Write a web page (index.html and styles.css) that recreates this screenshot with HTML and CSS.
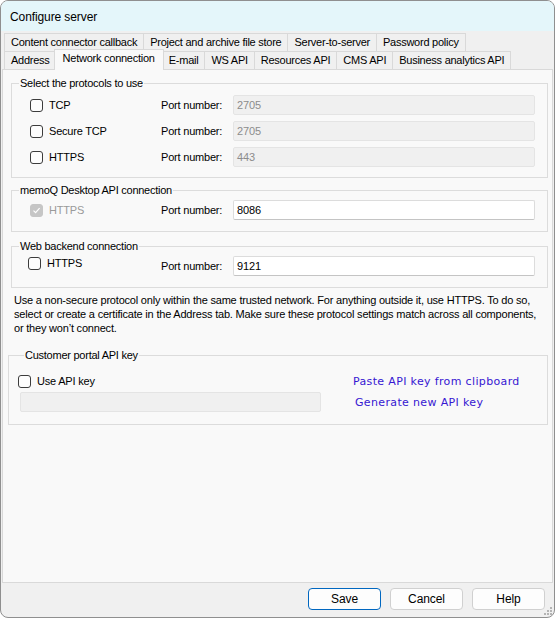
FILE: index.html
```
<!DOCTYPE html>
<html lang="en">
<head>
	<meta charset="UTF-8">
	<title>Configure server</title>
	<link rel="stylesheet" href="styles.css">
</head>
<body>
	<div class="window">
		<div class="titlebar">Configure server</div>

		<div class="tabstrip">
			<div class="tabrow">
				<span class="tab">Content connector callback</span>
				<span class="tab">Project and archive file store</span>
				<span class="tab">Server-to-server</span>
				<span class="tab">Password policy</span>
			</div>
			<div class="tabrow">
				<span class="tab">Address</span>
				<span class="tab active">Network connection</span>
				<span class="tab">E-mail</span>
				<span class="tab">WS API</span>
				<span class="tab">Resources API</span>
				<span class="tab">CMS API</span>
				<span class="tab">Business analytics API</span>
			</div>
		</div>

		<div class="panel">
			<fieldset class="group protocols">
				<legend>Select the protocols to use</legend>
				<div class="row">
					<span class="opt"><span class="check"></span>TCP</span>
					<span class="port-label">Port number:</span>
					<span class="field disabled">2705</span>
				</div>
				<div class="row">
					<span class="opt"><span class="check"></span>Secure TCP</span>
					<span class="port-label">Port number:</span>
					<span class="field disabled">2705</span>
				</div>
				<div class="row">
					<span class="opt"><span class="check"></span>HTTPS</span>
					<span class="port-label">Port number:</span>
					<span class="field disabled">443</span>
				</div>
			</fieldset>

			<fieldset class="group single desktop">
				<legend>memoQ Desktop API connection</legend>
				<div class="row">
					<span class="opt greyed"><span class="check checked-off">
						<svg width="9" height="9" viewBox="0 0 9 9"><path d="M1.5 4.6 L3.6 6.6 L7.6 2.2" fill="none" stroke="#fff" stroke-width="1.2"/></svg>
					</span>HTTPS</span>
					<span class="port-label">Port number:</span>
					<span class="field">8086</span>
				</div>
			</fieldset>

			<fieldset class="group single web">
				<legend>Web backend connection</legend>
				<div class="row">
					<span class="opt raised"><span class="check"></span>HTTPS</span>
					<span class="port-label">Port number:</span>
					<span class="field">9121</span>
				</div>
			</fieldset>

			<p class="note">Use a non-secure protocol only within the same trusted network. For anything outside it, use HTTPS. To do so,<br>select or create a certificate in the Address tab. Make sure these protocol settings match across all components,<br>or they won’t connect.</p>

			<fieldset class="group portal">
				<legend>Customer portal API key</legend>
				<div class="portal-grid">
					<div class="portal-left">
						<span class="opt"><span class="check"></span>Use API key</span>
						<span class="field disabled key"></span>
					</div>
					<div class="portal-links">
						<a class="link">Paste API key from clipboard</a>
						<a class="link second">Generate new API key</a>
					</div>
				</div>
			</fieldset>
		</div>

		<div class="footer">
			<button class="btn default">Save</button>
			<button class="btn">Cancel</button>
			<button class="btn">Help</button>
		</div>

		<svg class="grip" width="10" height="10" viewBox="0 0 10 10">
			<rect x="7" y="1" width="2" height="2" fill="#b4b4b4"/>
			<rect x="4" y="4" width="2" height="2" fill="#b4b4b4"/>
			<rect x="7" y="4" width="2" height="2" fill="#b4b4b4"/>
			<rect x="1" y="7" width="2" height="2" fill="#b4b4b4"/>
			<rect x="4" y="7" width="2" height="2" fill="#b4b4b4"/>
			<rect x="7" y="7" width="2" height="2" fill="#b4b4b4"/>
		</svg>
	</div>
</body>
</html>
```

FILE: styles.css
```
* {
	box-sizing: border-box;
}
html, body {
	margin: 0;
	padding: 0;
	background: #fff;
}
body {
	font-family: "Liberation Sans", Arial, sans-serif;
	font-size: 11px;
	color: #000;
}
.window {
	position: relative;
	width: 555px;
	height: 618px;
	border: 1px solid #8f8f8f;
	border-radius: 8px;
	overflow: hidden;
	background: #f0f0f0;
	display: flex;
	flex-direction: column;
}
.titlebar {
	height: 30px;
	flex: none;
	background: #e4f6fa;
	padding: 9px 0 0 9px;
	font-size: 12px;
	letter-spacing: -0.1px;
}

/* tabs */
.tabstrip {
	flex: none;
	padding: 2px 0 0 3px;
	position: relative;
	z-index: 1;
}
.tabrow {
	display: flex;
	height: 18px;
	align-items: flex-end;
}
.tab {
	height: 18px;
	line-height: 17px;
	padding: 0 6px;
	border: 1px solid #d9d9d9;
	border-bottom: none;
	margin-right: -1px;
	background: #f0f0f0;
	white-space: nowrap;
	letter-spacing: -0.25px;
}
.tab.active {
	height: 21px;
	margin: 0 -2px -1px -2px;
	padding: 0 8px;
	line-height: 17px;
	background: #f9f9f9;
	position: relative;
	z-index: 2;
}

/* panel */
.panel {
	flex: none;
	height: 514px;
	margin: 0 1px;
	border: 1px solid #d9d9d9;
	background: #f9f9f9;
	padding: 7px 4px 0 8px;
}
.group {
	margin: 0;
	border: 1px solid #dcdcdc;
	padding: 0;
}
.group legend {
	padding: 0 1px;
	margin-left: 7px;
	line-height: 13px;
	letter-spacing: -0.25px;
}
.protocols {
	padding: 5px 0 8px;
	height: 101px;
}
.row {
	display: grid;
	grid-template-columns: 131px 72px 302px;
	align-items: center;
	height: 20px;
	padding-left: 18px;
	margin-bottom: 6px;
}
.row:last-child {
	margin-bottom: 0;
}
.opt {
	display: flex;
	align-items: center;
	letter-spacing: -0.2px;
}
.opt.greyed {
	color: #9a9a9a;
}
.opt.raised {
	margin-top: -6px;
	margin-left: -2px;
	margin-right: 2px;
}
.check {
	width: 13px;
	height: 13px;
	border: 1px solid #3c3c3c;
	border-radius: 3px;
	background: #fdfdfd;
	margin-right: 6px;
	flex: none;
	display: flex;
	align-items: center;
	justify-content: center;
}
.check.checked-off {
	border-color: #c6c6c6;
	background: #c6c6c6;
}
.port-label {
	letter-spacing: -0.2px;
}
.field {
	height: 20px;
	line-height: 18px;
	border: 1px solid #dcdcdc;
	border-bottom-color: #c4c4c4;
	border-radius: 2px;
	background: #fff;
	padding-left: 3px;
	letter-spacing: -0.1px;
}
.field.disabled {
	background: #f0f0f0;
	border-color: #e4e4e4;
	color: #8c8c8c;
}
.single {
	height: 48px;
	padding-top: 3px;
}
.desktop {
	margin-top: 6px;
}
.web {
	margin-top: 8px;
}
.note {
	margin: 5px 0 0 3px;
	line-height: 14px;
	white-space: nowrap;
	letter-spacing: -0.2px;
}

/* portal */
.portal {
	margin: 14px 0 0 -3px;
	height: 76px;
	padding: 12px 0 0 10px;
}
.portal legend {
	margin-left: 5px;
}
.portal-grid {
	display: flex;
}
.portal-left {
	width: 302px;
	display: flex;
	flex-direction: column;
}
.portal-left .opt {
	height: 14px;
	margin-left: -1px;
}
.field.key {
	margin-top: 4px;
	height: 20px;
	margin-left: 1px;
}
.portal-links {
	margin-left: 32px;
	display: flex;
	flex-direction: column;
	padding-top: 1px;
}
.link {
	font-family: "DejaVu Sans", sans-serif;
	font-size: 11px;
	color: #3617d2;
	line-height: 13px;
	letter-spacing: 0.35px;
}
.link.second {
	margin-top: 8px;
	margin-left: 2px;
}

/* footer */
.footer {
	flex: 1;
	display: flex;
	justify-content: flex-end;
	gap: 9px;
	padding: 5px 9px 0 0;
}
.btn {
	width: 73px;
	height: 22px;
	border: 1px solid #d0d0d0;
	border-radius: 4px;
	background: #fdfdfd;
	font-family: "Liberation Sans", Arial, sans-serif;
	font-size: 12px;
	color: #000;
	padding: 0;
	letter-spacing: -0.1px;
}
.btn.default {
	border-color: #0067c0;
}
.grip {
	position: absolute;
	right: 1px;
	bottom: 1px;
}
```
